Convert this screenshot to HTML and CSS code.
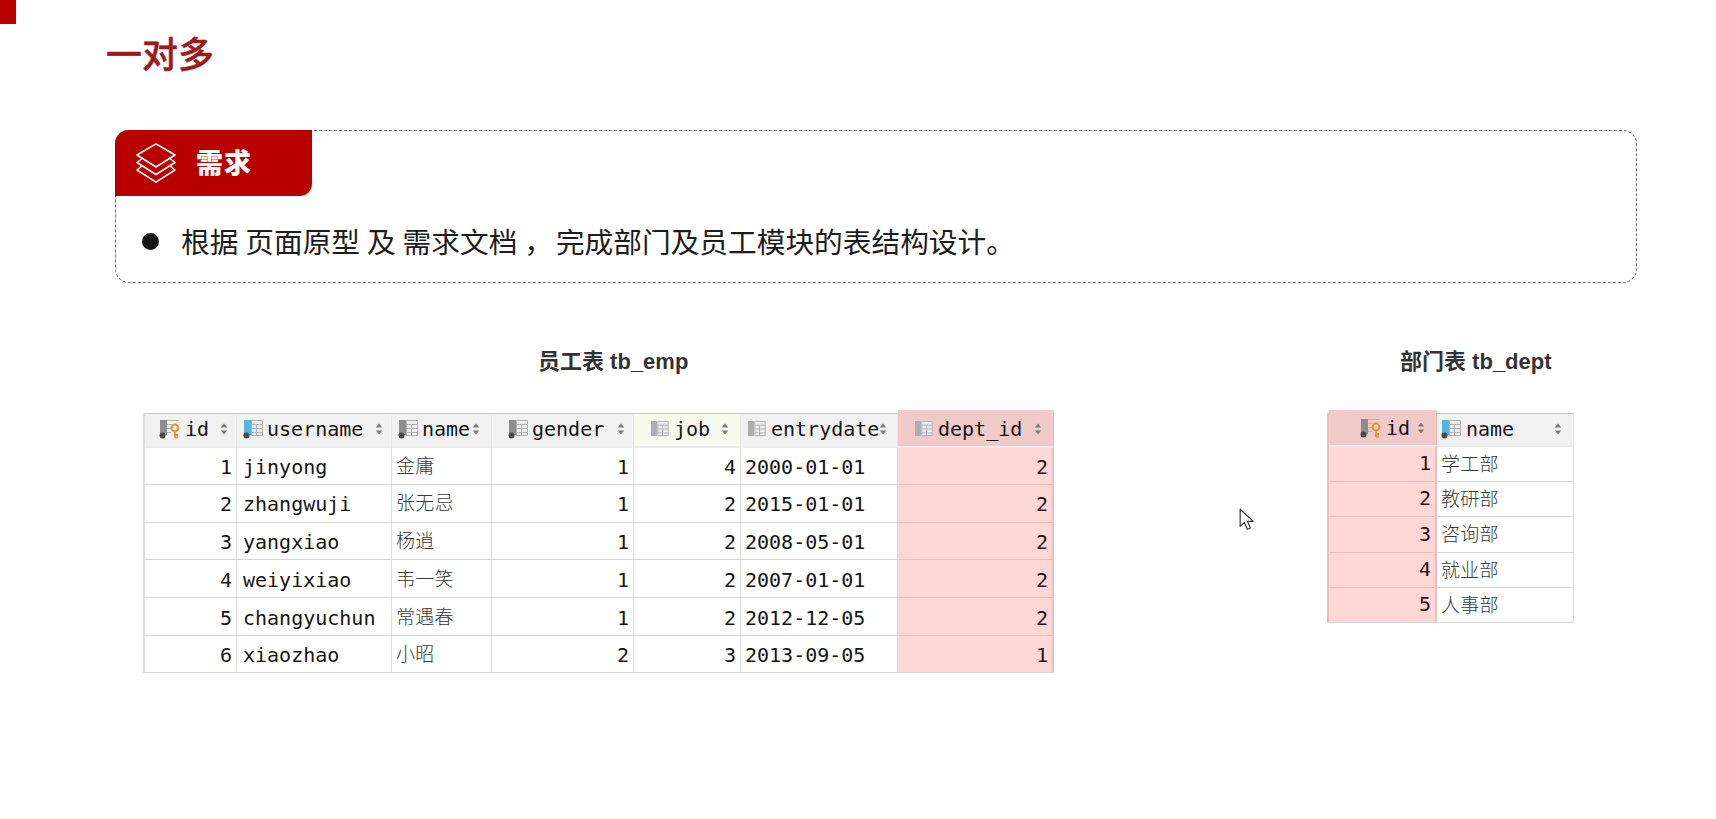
FILE: index.html
```html
<!DOCTYPE html>
<html lang="zh-CN">
<head>
<meta charset="utf-8">
<title>一对多</title>
<link rel="stylesheet" href="styles.css">
</head>
<body>
<svg class="defs" width="0" height="0" aria-hidden="true">
  <defs>
    <symbol id="sort" viewBox="0 0 8 12"><path d="M4 0.5 7.2 4.5H.8zM4 11.5 .8 7.5H7.2z"/></symbol>
    <symbol id="grid" viewBox="0 0 12 18"><path d="M0 1h12v16H0z" fill="#ececec"/><path d="M.5 1.5h11v15H.5zM.5 5.5h11M.5 9.5h11M.5 13.5h11M5.5 5.5v11" fill="none" stroke="#b2b2b2"/></symbol>
    <symbol id="col-gray" viewBox="0 0 20 20"><rect x="1" y="1" width="7" height="15" fill="#8d8d8d"/><circle cx="3.500" cy="16.500" r="3" fill="#4a4a4a"/><use href="#grid" x="8" y="0" width="12" height="18"/></symbol>
    <symbol id="col-blue" viewBox="0 0 20 20"><rect x="1" y="1" width="7" height="15" fill="#58b4dc"/><circle cx="3.500" cy="16.500" r="3" fill="#4a4a4a"/><use href="#grid" x="8" y="0" width="12" height="18"/></symbol>
    <symbol id="col-plain" viewBox="0 0 20 20"><rect x="1" y="2" width="6" height="15" fill="#adadad"/><use href="#grid" x="7" y="1" width="12" height="17"/></symbol>
    <symbol id="col-key" viewBox="0 0 22 20"><rect x="1" y="1" width="7" height="15" fill="#8d8d8d"/><circle cx="3.500" cy="16.500" r="3" fill="#4a4a4a"/><path d="M8 1.500h12M8 5.500h5M8 9.500h4M8 13.500h4" stroke="#b8b8b8" fill="none"/><circle cx="16" cy="9" r="3.400" fill="none" stroke="#dd9a26" stroke-width="2"/><path d="M16 12v7M16 16h3M16 18.500h3" stroke="#dd9a26" stroke-width="1.800" fill="none"/></symbol>
  </defs>
</svg>

<main class="slide">
  <div class="corner"></div>
  <h1 class="title">一对多</h1>

  <section class="card">
    <div class="tab">
      <svg class="layers" viewBox="0 0 40 40" fill="none" stroke="#fff" stroke-width="1.500" stroke-linejoin="round" stroke-linecap="round">
        <path d="M20 .8 39 12 20 24 1 12Z"/>
        <path d="M6 15.500 1 19.500 20 31.500 39 19.500 34 15.500"/>
        <path d="M6 22.800 1 27 20 39.200 39 27 34 22.800"/>
      </svg>
      <span class="tab-label">需求</span>
    </div>
    <ul class="req-list">
      <li class="req"><span>根据 页面原型 及 需求文档 <span class="comma">，</span> 完成部门及员工模块的表结构设计。</span></li>
    </ul>
  </section>

  <div class="tables">
    <section class="block block-emp">
      <h2 class="cap cap-emp">员工表 tb_emp</h2>
      <table class="grid grid-emp">
        <colgroup>
          <col class="c-id"><col class="c-username"><col class="c-name"><col class="c-gender"><col class="c-job"><col class="c-date"><col class="c-dept">
        </colgroup>
        <thead>
          <tr>
            <th class="p14 tight"><div class="hd"><svg class="ic ic-key"><use href="#col-key"/></svg><span>id</span><svg class="sort"><use href="#sort"/></svg></div></th>
            <th class="p6 tight"><div class="hd"><svg class="ic"><use href="#col-blue"/></svg><span>username</span><svg class="sort"><use href="#sort"/></svg></div></th>
            <th class="p6"><div class="hd"><svg class="ic"><use href="#col-gray"/></svg><span>name</span><svg class="sort"><use href="#sort"/></svg></div></th>
            <th class="p16 tight"><div class="hd"><svg class="ic"><use href="#col-gray"/></svg><span>gender</span><svg class="sort"><use href="#sort"/></svg></div></th>
            <th class="p16 th-job"><div class="hd"><svg class="ic"><use href="#col-plain"/></svg><span>job</span><svg class="sort"><use href="#sort"/></svg></div></th>
            <th class="p6"><div class="hd"><svg class="ic"><use href="#col-plain"/></svg><span>entrydate</span><svg class="sort"><use href="#sort"/></svg></div></th>
            <th class="p16 hl"><div class="hd"><svg class="ic"><use href="#col-plain"/></svg><span>dept_id</span><svg class="sort"><use href="#sort"/></svg></div></th>
          </tr>
        </thead>
        <tbody>
          <tr><td class="num">1</td><td>jinyong</td><td class="zh">金庸</td><td class="num">1</td><td class="num">4</td><td class="date">2000-01-01</td><td class="num hl">2</td></tr>
          <tr><td class="num">2</td><td>zhangwuji</td><td class="zh">张无忌</td><td class="num">1</td><td class="num">2</td><td class="date">2015-01-01</td><td class="num hl">2</td></tr>
          <tr><td class="num">3</td><td>yangxiao</td><td class="zh">杨逍</td><td class="num">1</td><td class="num">2</td><td class="date">2008-05-01</td><td class="num hl">2</td></tr>
          <tr><td class="num">4</td><td>weiyixiao</td><td class="zh">韦一笑</td><td class="num">1</td><td class="num">2</td><td class="date">2007-01-01</td><td class="num hl">2</td></tr>
          <tr><td class="num">5</td><td>changyuchun</td><td class="zh">常遇春</td><td class="num">1</td><td class="num">2</td><td class="date">2012-12-05</td><td class="num hl">2</td></tr>
          <tr><td class="num">6</td><td>xiaozhao</td><td class="zh">小昭</td><td class="num">2</td><td class="num">3</td><td class="date">2013-09-05</td><td class="num hl">1</td></tr>
        </tbody>
      </table>
    </section>

    <section class="block block-dept">
      <h2 class="cap cap-dept">部门表 tb_dept</h2>
      <table class="grid grid-dept">
        <colgroup><col class="c-did"><col class="c-dname"></colgroup>
        <thead>
          <tr>
            <th class="p31 hl"><div class="hd"><svg class="ic ic-key"><use href="#col-key"/></svg><span>id</span><svg class="sort"><use href="#sort"/></svg></div></th>
            <th class="p4"><div class="hd"><svg class="ic ic-wide"><use href="#col-blue"/></svg><span>name</span><svg class="sort"><use href="#sort"/></svg></div></th>
          </tr>
        </thead>
        <tbody>
          <tr><td class="num hl">1</td><td class="zh">学工部</td></tr>
          <tr><td class="num hl">2</td><td class="zh">教研部</td></tr>
          <tr><td class="num hl">3</td><td class="zh">咨询部</td></tr>
          <tr><td class="num hl">4</td><td class="zh">就业部</td></tr>
          <tr><td class="num hl">5</td><td class="zh">人事部</td></tr>
        </tbody>
      </table>
    </section>
  </div>

  <svg class="cursor" viewBox="0 0 14 20" width="16" height="23"><path d="M1 1v15l3.700-3.400 2.600 6 2.700-1.200-2.600-5.800H12.500Z" fill="#fff" stroke="#333" stroke-width="1" stroke-linejoin="round"/></svg>
</main>
</body>
</html>
```

FILE: styles.css
```css
* { box-sizing: border-box; }
html, body { margin: 0; padding: 0; background: #fff; }
body { width: 1716px; height: 819px; overflow: hidden; }
.defs { position: absolute; }

.slide {
  position: relative;
  width: 1716px;
  height: 819px;
  padding: 28px 0 0 0;
  font-family: "Noto Sans CJK SC", "Noto Sans", sans-serif;
}
.corner { position: absolute; left: 0; top: 0; width: 16px; height: 24px; background: #b80000; }

.title {
  margin: 0 0 0 106px;
  font-size: 36px;
  line-height: 48px;
  font-weight: 500;
  -webkit-text-stroke: .5px #9c1a1a;
  color: #9c1a1a;
}

.card {
  margin: 54px 0 0 115px;
  width: 1522px;
  height: 153px;
  border: 1px dashed #6f6f6f;
  border-radius: 14px;
}
.tab {
  display: flex;
  align-items: center;
  width: 197px;
  height: 66px;
  margin: -1px 0 0 -1px;
  padding-left: 21px;
  background: #b80000;
  border-radius: 14px 0 12px 0;
}
.layers { width: 40px; height: 40px; flex: none; }
.tab-label { margin: 0 0 2px 20px; font-size: 27px; line-height: 36px; font-weight: 900; color: #fff; letter-spacing: 1px; }

.req-list { list-style: none; margin: 0; padding: 25px 0 0 26px; }
.req {
  display: flex;
  align-items: center;
  font-size: 28.700px;
  line-height: 40px;
  word-spacing: .5px;
  color: #1c1c1c;
  white-space: pre;
}
.comma { letter-spacing: -4px; }
.req::before {
  content: "";
  flex: none;
  width: 17px;
  height: 17px;
  margin-right: 22px;
  border-radius: 50%;
  background: #161616;
}

.tables { display: flex; margin: 64px 0 0 143px; }
.block-dept { margin-left: 273px; }

.cap {
  margin: 0;
  font-family: "Liberation Sans", "Noto Sans CJK SC", sans-serif;
  font-size: 22px;
  line-height: 30px;
  font-weight: 700;
  color: #333;
  white-space: nowrap;
}
.cap-emp { padding-left: 395px; }
.cap-dept { padding-left: 73px; }

.grid {
  margin-top: 36px;
  table-layout: fixed;
  border-collapse: separate;
  border-spacing: 0;
  font-family: "DejaVu Sans Mono", "Liberation Mono", monospace;
  font-size: 20px;
  color: #141414;
  border-left: 2px solid #dcdcdc;
}
.grid-emp { width: 911px; }
.grid-dept { width: 247px; border-left-color: #efbcbc; }
.c-id { width: 92px; } .c-username { width: 155px; } .c-name { width: 100px; } .c-gender { width: 142px; }
.c-job { width: 107px; } .c-date { width: 157px; } .c-dept { width: 156px; }
.c-did { width: 108px; } .c-dname { width: 137px; }

.grid th {
  padding: 0 11px 2px 0;
  background: #f1f1f1;
  border-top: 1px solid #c6c6c6;
  border-right: 1px solid #e8e8e8;
  font-weight: 400;
  text-align: left;
}
.grid-emp th { height: 33px; }
.grid-dept th { height: 32px; }
.grid th.tight { padding-right: 8px; }
.grid th.p4 { padding-left: 4px; }
.grid th.p6 { padding-left: 6px; }
.grid th.p14 { padding-left: 14px; }
.grid th.p16 { padding-left: 16px; }
.grid th.p31 { padding-left: 31px; }
.grid th.th-job { background: #f9faee; }
.hd { display: flex; align-items: center; }
.ic { flex: none; width: 20px; height: 20px; margin-right: 4px; }
.ic-key { width: 22px; margin-right: 4px; }
.ic-wide { margin-right: 5px; }
.sort { flex: none; width: 8px; height: 12px; margin-left: auto; fill: #7a7a7a; }

.grid td {
  padding: 0 4px 0 6px;
  border-top: 1px solid #d6d6d6;
  border-right: 1px solid #dedede;
  white-space: nowrap;
  overflow: hidden;
  line-height: 24px;
}
.grid-emp td { padding-top: 2px; }
.grid-dept td { padding-bottom: 1px; }
.grid tbody tr:first-child td { border-top: 2px solid #ececec; }
.grid tbody tr:last-child td { border-bottom: 1px solid #d6d6d6; }
.grid-emp td { height: 37.830px; }
.grid-dept td { height: 35.500px; }
.grid td.num { text-align: right; }
.grid td.date { padding-left: 4px; }
.grid td.zh {
  padding: 0 4px 2px;
  font-family: "Noto Sans CJK SC", sans-serif;
  font-weight: 300;
  font-size: 19px;
  letter-spacing: .3px;
  color: #3a3a3a;
}
.grid th.hl {
  background: #f0c9c9;
  border-top: none;
  border-right: 1px solid #e7b4b4;
  box-shadow: 0 -3px 0 #f4caca;
}
.grid td.hl {
  background: #ffd7d7;
  border-top-color: #f0bcbc;
  border-right: 2px solid #efbcbc;
  color: #2a1010;
}

.cursor { position: absolute; left: 1239px; top: 508px; }
```
